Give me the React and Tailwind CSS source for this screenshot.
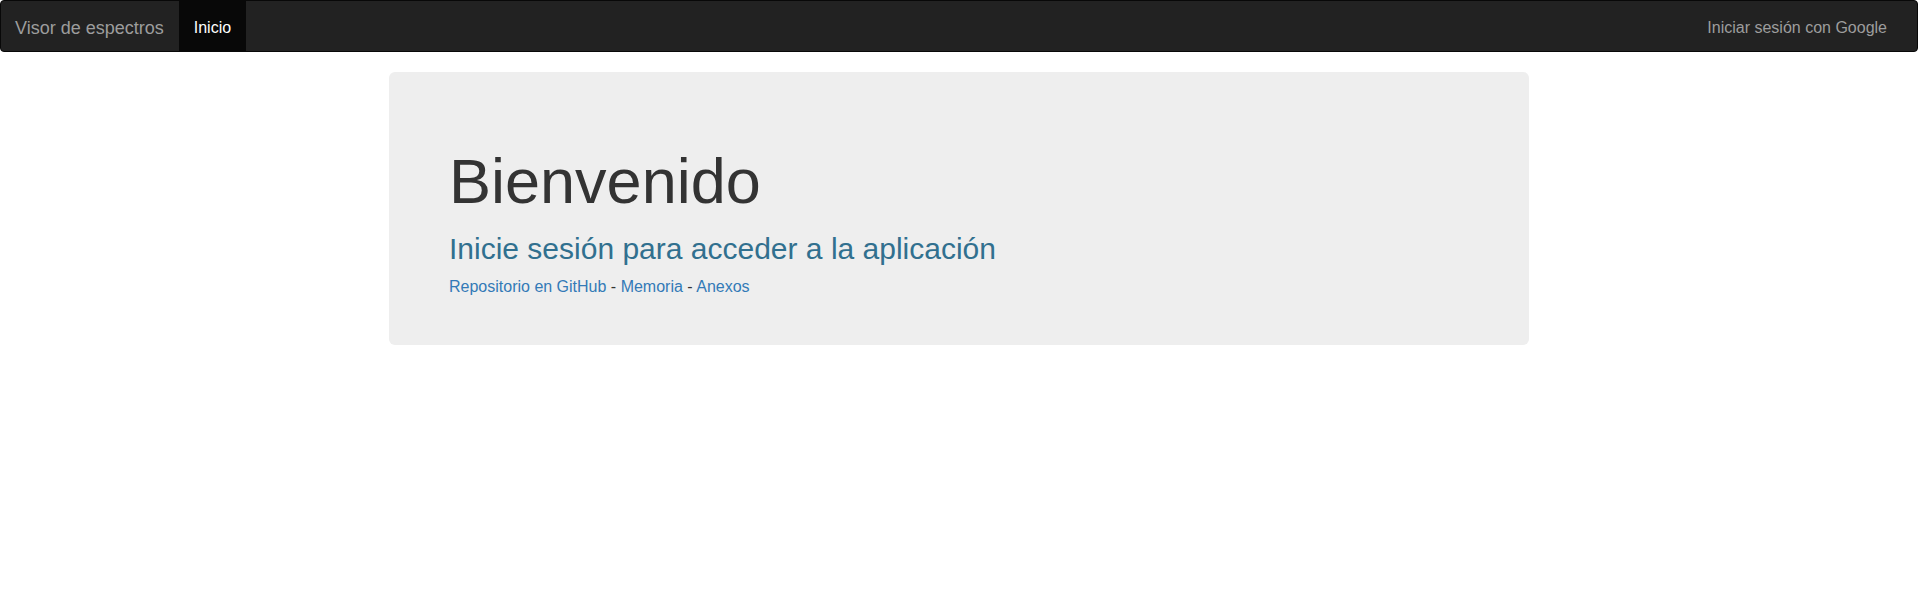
export default function App() {
  return (
    <div className="min-h-[601px] bg-white font-['Liberation_Sans',Arial,sans-serif] text-[16px] text-[#333]">
      {/* Barra de navegación */}
      <nav className="flex h-[52px] items-stretch justify-between rounded-[4px] border border-[#080808] bg-[#222]">
        <div className="flex items-stretch">
          <a href="#" className="flex items-center pl-[14px] pr-[15px] pt-[4px] text-[18px] leading-[20px] text-[#9d9d9d]">
            Visor de espectros
          </a>
          <a href="#" className="flex items-center bg-[#080808] px-[15px] pt-[4px] leading-[20px] text-white">
            Inicio
          </a>
        </div>
        <a href="#" className="mr-[15px] flex items-center px-[15px] pt-[4px] leading-[20px] text-[#9d9d9d]">
          Iniciar sesión con Google
        </a>
      </nav>

      {/* Jumbotron */}
      <div className="mx-auto mt-[20px] w-[1140px] rounded-[6px] bg-[#eee] px-[60px] pt-[74px] pb-[48px]">
        <h1 className="text-[63px] leading-[70px] text-[#333]">Bienvenido</h1>
        <h2 className="mt-[16px] text-[30px] leading-[33px] text-[#31708f]">
          Inicie sesión para acceder a la aplicación
        </h2>
        <p className="mt-[12px] leading-[20px] text-[#337ab7]">
          <a href="#">Repositorio en GitHub</a>
          <span className="text-[#333]"> - </span>
          <a href="#">Memoria</a>
          <span className="text-[#333]"> - </span>
          <a href="#">Anexos</a>
        </p>
      </div>
    </div>
  )
}
